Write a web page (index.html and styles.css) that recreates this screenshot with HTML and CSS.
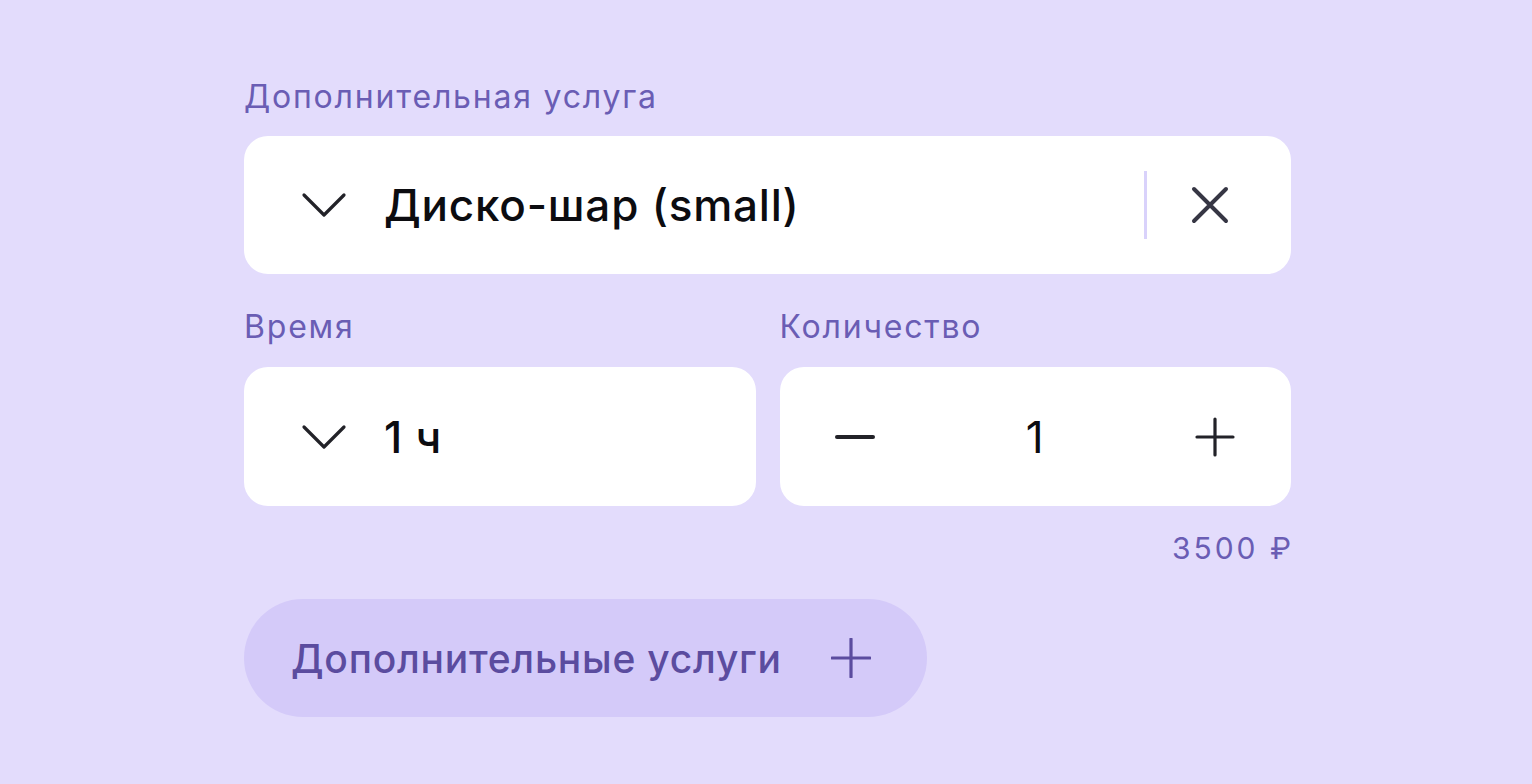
FILE: index.html
```html
<!DOCTYPE html>
<html>
<head>
    <meta charset="UTF-8">
    <title>Дополнительная услуга</title>
    <link rel="stylesheet" href="styles.css">
</head>
<body>
<div class="form">
    <p class="label">Дополнительная услуга</p>
    <div class="field field_main">
        <svg class="chevron" viewBox="0 0 48 28" width="48" height="28">
            <path d="M4 4 L24 24 L44 4" fill="none" stroke="#222228" stroke-width="3.2" stroke-linecap="round" stroke-linejoin="round"/>
        </svg>
        <span class="value">Диско-шар (small)</span>
        <span class="divider"></span>
        <svg class="clear" viewBox="0 0 40 40" width="40" height="40">
            <path d="M4 4 L36 36 M36 4 L4 36" fill="none" stroke="#363644" stroke-width="4" stroke-linecap="round"/>
        </svg>
    </div>

    <div class="row">
        <div class="col">
            <p class="label">Время</p>
            <div class="field">
                <svg class="chevron" viewBox="0 0 48 28" width="48" height="28">
                    <path d="M4 4 L24 24 L44 4" fill="none" stroke="#222228" stroke-width="3.2" stroke-linecap="round" stroke-linejoin="round"/>
                </svg>
                <span class="value">1 ч</span>
            </div>
        </div>
        <div class="col">
            <p class="label">Количество</p>
            <div class="field field_counter">
                <svg class="step" viewBox="0 0 40 40" width="40" height="40">
                    <path d="M2 20 L38 20" fill="none" stroke="#222228" stroke-width="4" stroke-linecap="round"/>
                </svg>
                <span class="count">1</span>
                <svg class="step" viewBox="0 0 40 40" width="40" height="40">
                    <path d="M2 20 L38 20 M20 2 L20 38" fill="none" stroke="#222228" stroke-width="3.2" stroke-linecap="round"/>
                </svg>
            </div>
        </div>
    </div>
    <p class="price">3500 ₽</p>

    <button class="add_btn">
        <span>Дополнительные услуги</span>
        <svg viewBox="0 0 40 40" width="40" height="40">
            <path d="M1 20 L39 20 M20 1 L20 39" fill="none" stroke="#5b4c9f" stroke-width="3.2" stroke-linecap="round"/>
        </svg>
    </button>
</div>
</body>
</html>
```

FILE: styles.css
```css
html, body {
    margin: 0;
    padding: 0;
    background: #e3dcfc;
}
body {
    font-family: Inter, "Noto Sans", sans-serif;
}
p {
    margin: 0;
}
.form {
    width: 1047px;
    margin-left: 244px;
    padding-top: 77px;
    display: flex;
    flex-direction: column;
}
.label {
    font-size: 32px;
    line-height: 40px;
    letter-spacing: 1.8px;
    color: #6a5db4;
    margin-bottom: 19px;
}
.field {
    background: #fff;
    border-radius: 24px;
    height: 139px;
    display: flex;
    align-items: center;
    padding-left: 56px;
    box-sizing: border-box;
}
.field_main {
    height: 138px;
    margin-bottom: 33px;
}
.chevron {
    margin-right: 36px;
}
.value {
    font-size: 44px;
    font-weight: 500;
    letter-spacing: 0.8px;
    color: #0c0c10;
    flex: 1;
}
.divider {
    width: 3px;
    height: 68px;
    background: #d9d2fb;
    margin-right: 43px;
}
.clear {
    margin-right: 61px;
}
.row {
    display: flex;
    gap: 24px;
}
.col {
    flex: 1;
}
.row .label {
    margin-bottom: 20px;
}
.field_counter {
    padding-left: 55px;
    padding-right: 56px;
    justify-content: space-between;
}
.count {
    font-size: 44px;
    color: #0c0c10;
}
.price {
    text-align: right;
    font-size: 30px;
    line-height: 40px;
    letter-spacing: 3px;
    margin-right: -3px;
    color: #6a5db4;
    margin-top: 22px;
}
.add_btn {
    align-self: flex-start;
    margin-top: 31px;
    height: 118px;
    border: none;
    border-radius: 59px;
    background: #d4caf9;
    display: flex;
    align-items: center;
    gap: 49px;
    padding: 0 56px 0 47px;
    font-family: Inter, "Noto Sans", sans-serif;
    font-size: 39px;
    font-weight: 500;
    letter-spacing: 0.75px;
    color: #5b4c9f;
}
```
